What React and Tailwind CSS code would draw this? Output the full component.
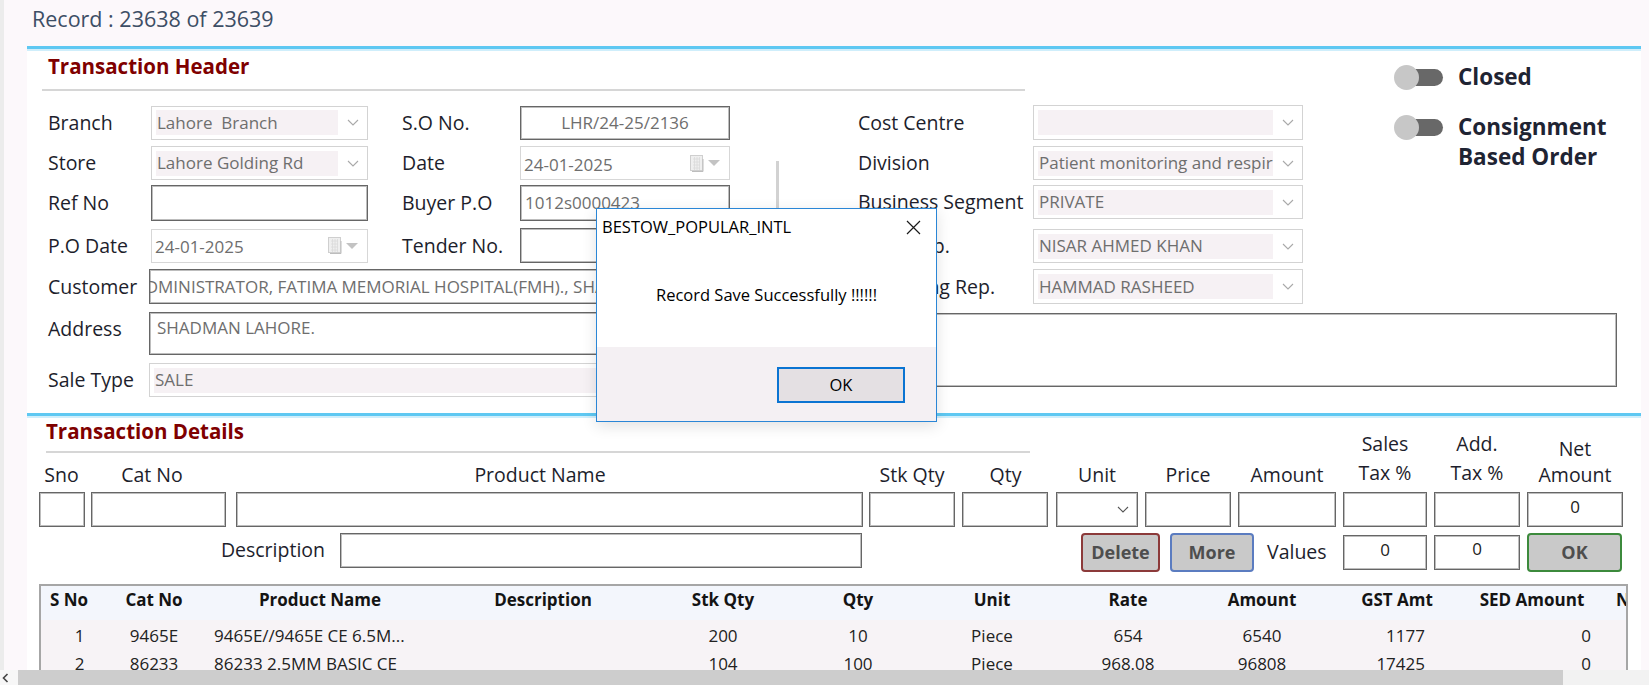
import React from 'react';

const label = "text-[19.5px] leading-[26px] text-[#1d1e2c] whitespace-nowrap";
const ctrlText = "text-[17px] text-[#6e6e6e] whitespace-nowrap";

function Chevron({ color = '#a9a9a9' }) {
  return (
    <svg width="12" height="7" viewBox="0 0 12 7">
      <path d="M1 1l5 5 5-5" fill="none" stroke={color} strokeWidth="1.1" />
    </svg>
  );
}

function Combo({ value = '', className = '' }) {
  return (
    <div className={`flex items-center border border-[#d3d3d3] bg-white pl-[4px] ${className}`}>
      <div className={`h-[25px] flex-1 bg-[#f6f1f4] flex items-center pl-[1px] overflow-hidden ${ctrlText}`}>
        {value}
      </div>
      <div className="w-[29px] flex justify-center">
        <Chevron />
      </div>
    </div>
  );
}

function TextBox({ children, className = '', align = 'justify-start' }) {
  return (
    <div
      className={`flex items-center ${align} border border-[#666] shadow-[inset_0_0_0_1px_#bdbdbd] bg-white px-[4px] overflow-hidden ${ctrlText} ${className}`}
    >
      {children}
    </div>
  );
}

function DatePicker({ value, className = '' }) {
  return (
    <div className={`flex items-center border border-[#d7d7d7] bg-white pl-[3px] pr-[9px] ${className}`}>
      <span className={`flex-1 pt-[3px] ${ctrlText}`}>{value}</span>
      <svg width="14" height="17" viewBox="0 0 14 17">
        <rect x="0.5" y="0.5" width="12" height="15" fill="#efefef" stroke="#cfcfcf" />
        <path d="M3 4h7M3 7h7M3 10h7M3 13h7M4.5 2v13M7 2v13M9.5 2v13" stroke="#dadada" strokeWidth="0.8" />
        <path d="M13 4v12.5H2" fill="none" stroke="#bdbdbd" />
      </svg>
      <svg width="12" height="6" viewBox="0 0 12 6" className="ml-[4px]">
        <path d="M0 0h12L6 6z" fill="#c3c3c3" />
      </svg>
    </div>
  );
}

function Toggle() {
  return (
    <div className="flex items-center w-[49px] h-[25px]">
      <div className="w-[25px] h-[25px] rounded-full bg-[#c7c7c7] relative z-10" />
      <div className="w-[35px] h-[17px] rounded-full bg-[#686868] ml-[-11px]" />
    </div>
  );
}

function CyanLine() {
  return (
    <div className="shrink-0">
      <div className="h-[3px] bg-[#5ec8f2]" />
      <div className="h-[2px] bg-[#cfeefb]" />
    </div>
  );
}

function HeaderSection() {
  return (
    <div className="h-[362px] shrink-0 flex flex-col">
      <div className="flex">
        <div className="w-[1367px] flex flex-col">
          <div className="h-[30px] pl-[21px] flex items-center text-[20.5px] font-bold text-[#7f0000]">
            Transaction Header
          </div>
          <div className="ml-[15px] mt-[8px] w-[983px] h-[2px] bg-[#d6d6d6]" />
          <div className="mt-[14px] flex">
            <div className="pl-[21px] flex flex-col">
              <div className="h-[35px] flex items-center">
                <div className={`w-[103px] ${label}`}>Branch</div>
                <Combo value={'Lahore\u00a0 Branch'} className="w-[217px] h-[34px]" />
                <div className={`ml-[34px] w-[118px] ${label}`}>S.O No.</div>
                <TextBox className="w-[210px] h-[34px]" align="justify-center">LHR/24-25/2136</TextBox>
              </div>
              <div className="mt-[6px] h-[34px] flex items-center">
                <div className={`w-[103px] ${label}`}>Store</div>
                <Combo value="Lahore Golding Rd" className="w-[217px] h-[34px]" />
                <div className={`ml-[34px] w-[118px] ${label}`}>Date</div>
                <DatePicker value="24-01-2025" className="w-[210px] h-[34px]" />
              </div>
              <div className="mt-[5px] h-[36px] flex items-center">
                <div className={`w-[103px] ${label}`}>Ref No</div>
                <TextBox className="w-[217px] h-[36px]" />
                <div className={`ml-[34px] w-[118px] ${label}`}>Buyer P.O</div>
                <TextBox className="w-[210px] h-[36px]">1012s0000423</TextBox>
              </div>
              <div className="mt-[7px] h-[35px] flex items-center">
                <div className={`w-[103px] ${label}`}>P.O Date</div>
                <DatePicker value="24-01-2025" className="w-[217px] h-[34px]" />
                <div className={`ml-[34px] w-[118px] ${label}`}>Tender No.</div>
                <TextBox className="w-[210px] h-[35px]" />
              </div>
              <div className="mt-[6px] h-[35px] flex items-center">
                <div className={`w-[101px] ${label}`}>Customer</div>
                <TextBox className="w-[581px] h-[35px]">
                  <span className="ml-[-19px]">ADMINISTRATOR, FATIMA MEMORIAL HOSPITAL(FMH)., SHADMAN LAHORE.</span>
                </TextBox>
              </div>
            </div>
            <div className="ml-[46px] mt-[56px] w-[3px] h-[140px] bg-[#d2d2d2]" />
            <div className="ml-[79px] flex flex-col">
              <div className="h-[35px] flex items-center">
                <div className={`w-[175px] ${label}`}>Cost Centre</div>
                <Combo className="w-[270px] h-[35px]" />
              </div>
              <div className="mt-[6px] h-[34px] flex items-center">
                <div className={`w-[175px] ${label}`}>Division</div>
                <Combo value="Patient monitoring and respiratory" className="w-[270px] h-[34px]" />
              </div>
              <div className="mt-[5px] h-[34px] flex items-center">
                <div className={`w-[175px] ${label}`}>Business Segment</div>
                <Combo value="PRIVATE" className="w-[270px] h-[34px]" />
              </div>
              <div className="mt-[10px] h-[34px] flex items-center">
                <div className={`w-[175px] ${label}`}>Sales Rep.</div>
                <Combo value="NISAR AHMED KHAN" className="w-[270px] h-[34px]" />
              </div>
              <div className="mt-[6px] h-[35px] flex items-center">
                <div className={`w-[175px] ${label}`}>Marketing Rep.</div>
                <Combo value="HAMMAD RASHEED" className="w-[270px] h-[35px]" />
              </div>
            </div>
          </div>
        </div>
        <div className="pt-[13px] flex flex-col">
          <div className="h-[26px] flex items-center gap-[15px]">
            <Toggle />
            <span className="text-[22.5px] font-bold text-[#1f2433] leading-[30px]">Closed</span>
          </div>
          <div className="mt-[22px] flex items-start gap-[15px]">
            <div className="mt-[3px]">
              <Toggle />
            </div>
            <span className="text-[22.5px] font-bold text-[#1f2433] leading-[30px]">
              Consignment
              <br />
              Based Order
            </span>
          </div>
        </div>
      </div>
      <div className="mt-[8px] pl-[21px] flex">
        <div className="w-[682px] flex flex-col">
          <div className="h-[43px] flex items-start">
            <div className={`w-[101px] pt-[4px] ${label}`}>Address</div>
            <div className={`w-[581px] h-[43px] border border-[#666] shadow-[inset_0_0_0_1px_#bdbdbd] bg-white pl-[7px] pt-[4px] leading-[22px] ${ctrlText}`}>
              SHADMAN LAHORE.
            </div>
          </div>
          <div className="mt-[8px] h-[34px] flex items-center">
            <div className={`w-[101px] ${label}`}>Sale Type</div>
            <Combo value="SALE" className="w-[581px] h-[34px]" />
          </div>
        </div>
        <div className="ml-[30px] mt-[1px] w-[857px] h-[74px] border border-[#666] shadow-[inset_0_0_0_1px_#bdbdbd] bg-white" />
      </div>
    </div>
  );
}

function Button({ children, border, className = '' }) {
  return (
    <div
      className={`h-[39px] flex items-center justify-center rounded-[4px] border-2 ${border} bg-[#c9c9c9] text-[18px] font-bold text-[#4e4e4e] ${className}`}
    >
      {children}
    </div>
  );
}

const cols = [
  { h: 'S No', w: 67, hc: 'justify-start pl-[9px]', vc: 'justify-center pl-[10px]' },
  { h: 'Cat No', w: 92, hc: 'justify-center', vc: 'justify-center' },
  { h: 'Product Name', w: 240, hc: 'justify-center', vc: 'justify-start pl-[14px]' },
  { h: 'Description', w: 206, hc: 'justify-center', vc: 'justify-center' },
  { h: 'Stk Qty', w: 154, hc: 'justify-center', vc: 'justify-center' },
  { h: 'Qty', w: 116, hc: 'justify-center', vc: 'justify-center' },
  { h: 'Unit', w: 152, hc: 'justify-center', vc: 'justify-center' },
  { h: 'Rate', w: 120, hc: 'justify-center', vc: 'justify-center' },
  { h: 'Amount', w: 148, hc: 'justify-center', vc: 'justify-center' },
  { h: 'GST Amt', w: 122, hc: 'justify-center', vc: 'justify-end pr-[33px]' },
  { h: 'SED Amount', w: 142, hc: 'justify-center pl-[6px]', vc: 'justify-end pr-[9px]' },
  { h: 'Net Amount', w: 120, hc: 'justify-start pl-[16px]', vc: 'justify-end' },
];

const rows = [
  ['1', '9465E', '9465E//9465E CE 6.5M...', '', '200', '10', 'Piece', '654', '6540', '1177', '0', ''],
  ['2', '86233', '86233 2.5MM BASIC CE', '', '104', '100', 'Piece', '968.08', '96808', '17425', '0', ''],
];

function DetailsSection() {
  return (
    <div className="shrink-0 flex flex-col">
      <div className="grid pl-[12px] grid-cols-[45px_138px_626px_86px_87px_82px_86px_98px_84px_86px_96px] grid-rows-[37px_37px_36px_48px] gap-x-[7px]">
        <div className="row-start-1 col-start-1 col-span-6 flex flex-col pl-[7px]">
          <div className="h-[26px] flex items-center text-[20.5px] font-bold text-[#7f0000] whitespace-nowrap">
            Transaction Details
          </div>
          <div className="mt-[7px] w-[984px] h-[2px] bg-[#d6d6d6]" />
        </div>

        <div className={`row-start-2 col-start-1 flex items-end justify-center pb-[4px] ${label}`}>Sno</div>
        <div className={`row-start-2 col-start-2 flex items-end justify-center pr-[16px] pb-[4px] ${label}`}>Cat No</div>
        <div className={`row-start-2 col-start-3 flex items-end justify-center pr-[18px] pb-[4px] ${label}`}>Product Name</div>
        <div className={`row-start-2 col-start-4 flex items-end justify-center pb-[4px] ${label}`}>Stk Qty</div>
        <div className={`row-start-2 col-start-5 flex items-end justify-center pb-[4px] ${label}`}>Qty</div>
        <div className={`row-start-2 col-start-6 flex items-end justify-center pb-[4px] ${label}`}>Unit</div>
        <div className={`row-start-2 col-start-7 flex items-end justify-center pb-[4px] ${label}`}>Price</div>
        <div className={`row-start-2 col-start-8 flex items-end justify-center pb-[4px] ${label}`}>Amount</div>
        <div className="row-start-1 row-span-2 col-start-9 flex items-end justify-center pb-[5px]">
          <div className={`${label} leading-[29px] text-center`}>Sales<br />Tax %</div>
        </div>
        <div className="row-start-1 row-span-2 col-start-10 flex items-end justify-center pb-[5px]">
          <div className={`${label} leading-[29px] text-center`}>Add.<br />Tax %</div>
        </div>
        <div className="row-start-1 row-span-2 col-start-11 flex items-end justify-center pb-[4px]">
          <div className={`${label} leading-[25px] text-center`}>Net<br />Amount</div>
        </div>

        <div className="row-start-3 col-start-1"><TextBox className="w-[46px] h-[35px]" /></div>
        <div className="row-start-3 col-start-2"><TextBox className="w-[135px] h-[35px]" /></div>
        <div className="row-start-3 col-start-3"><TextBox className="w-[627px] h-[35px]" /></div>
        <div className="row-start-3 col-start-4"><TextBox className="w-[86px] h-[35px]" /></div>
        <div className="row-start-3 col-start-5"><TextBox className="w-[86px] h-[35px]" /></div>
        <div className="row-start-3 col-start-6">
          <div className="w-[82px] h-[35px] flex items-center justify-end pr-[8px] border border-[#666] shadow-[inset_0_0_0_1px_#bdbdbd] bg-white">
            <Chevron color="#555" />
          </div>
        </div>
        <div className="row-start-3 col-start-7"><TextBox className="w-[86px] h-[35px]" /></div>
        <div className="row-start-3 col-start-8"><TextBox className="w-[98px] h-[35px]" /></div>
        <div className="row-start-3 col-start-9"><TextBox className="w-[84px] h-[35px]" /></div>
        <div className="row-start-3 col-start-10"><TextBox className="w-[86px] h-[35px]" /></div>
        <div className="row-start-3 col-start-11">
          <TextBox className="w-[96px] h-[35px] pb-[6px] !text-[#222]" align="justify-center">0</TextBox>
        </div>

        <div className="row-start-4 col-start-1 col-span-3 flex items-center justify-end gap-[15px] pb-[4px]">
          <div className={label}>Description</div>
          <TextBox className="w-[522px] h-[35px]" />
        </div>
        <div className="row-start-4 col-start-4 col-span-5 flex items-center pl-[212px]">
          <Button border="border-[#8c3a3a]" className="w-[79px]">Delete</Button>
          <Button border="border-[#5b7cc0]" className="w-[84px] ml-[10px]">More</Button>
          <div className={`ml-[13px] ${label}`}>Values</div>
        </div>
        <div className="row-start-4 col-start-9 flex items-center">
          <TextBox className="w-[84px] h-[35px] pb-[4px] !text-[#222]" align="justify-center">0</TextBox>
        </div>
        <div className="row-start-4 col-start-10 flex items-center">
          <TextBox className="w-[86px] h-[35px] pb-[6px] !text-[#222]" align="justify-center">0</TextBox>
        </div>
        <div className="row-start-4 col-start-11 flex items-center">
          <Button border="border-[#3c8a3c]" className="w-[95px]">OK</Button>
        </div>
      </div>

      <div className="mt-[8px] ml-[12px] w-[1589px] h-[120px] border-2 border-[#a6a6a6] overflow-hidden">
        <div className="w-[1700px] h-[34px] flex bg-[#f3f6fc] pb-[6px]">
          {cols.map((c) => (
            <div
              key={c.h}
              style={{ width: c.w }}
              className={`shrink-0 flex items-center whitespace-nowrap text-[17px] font-bold text-[#141414] ${c.hc}`}
            >
              {c.h}
            </div>
          ))}
        </div>
        <div className="w-[1700px] pt-[2px] bg-[#f7f3f6] h-[90px]">
          {rows.map((r, i) => (
            <div key={i} className="h-[28px] flex">
              {r.map((v, j) => (
                <div
                  key={j}
                  style={{ width: cols[j].w }}
                  className={`shrink-0 flex items-center whitespace-nowrap text-[17px] text-[#222] ${cols[j].vc}`}
                >
                  {v}
                </div>
              ))}
            </div>
          ))}
        </div>
      </div>
    </div>
  );
}

function Dialog() {
  return (
    <div className="absolute left-[596px] top-[208px] w-[341px] h-[214px] border border-[#2a86d6] bg-white flex flex-col shadow-[0_4px_14px_rgba(0,0,0,0.12)]">
      <div className="h-[37px] flex items-center pl-[5px] pr-[15px]">
        <span className="text-[16.5px] text-black">BESTOW_POPULAR_INTL</span>
        <svg width="15" height="15" viewBox="0 0 15 15" className="ml-auto">
          <path d="M1 1l13 13M14 1L1 14" stroke="#1a1a1a" strokeWidth="1.2" />
        </svg>
      </div>
      <div className="h-[101px] flex items-center justify-center pb-[2px] text-[16.5px] text-black">
        Record Save Successfully !!!!!!
      </div>
      <div className="flex-1 bg-[#f4f0f3] pl-[180px] pt-[20px]">
        <div className="w-[128px] h-[36px] border-2 border-[#0a74d2] bg-[#e4e0e3] flex items-center justify-center text-[16.5px] text-black">
          OK
        </div>
      </div>
    </div>
  );
}

function Scrollbar() {
  return (
    <div className="h-[15px] shrink-0 flex bg-[#f2f2f2]">
      <div className="w-[18px] flex items-center justify-start pl-[2px] bg-[#f7f7f7]">
        <svg width="7" height="10" viewBox="0 0 7 10">
          <path d="M5.5 1L1.5 5l4 4" fill="none" stroke="#444" strokeWidth="1.6" />
        </svg>
      </div>
      <div className="w-[1545px] bg-[#cdcdcd]" />
    </div>
  );
}

export default function App() {
  return (
    <div className="w-[1649px] h-[685px] overflow-hidden relative flex flex-col bg-[#fcf8fb] font-['Open_Sans',sans-serif]">
      <div className="flex h-[670px] shrink-0">
        <div className="w-[4px] bg-[#ececec]" />
        <div className="flex-1 flex flex-col">
          <div className="h-[46px] shrink-0 pl-[28px] pt-[4px] text-[21.5px] leading-[30px] text-[#3d4e65]">
            Record : 23638 of 23639
          </div>
          <div className="ml-[23px] w-[1614px] flex-1 min-h-0 bg-white flex flex-col overflow-hidden">
            <CyanLine />
            <HeaderSection />
            <CyanLine />
            <DetailsSection />
          </div>
        </div>
      </div>
      <Scrollbar />
      <Dialog />
    </div>
  );
}
